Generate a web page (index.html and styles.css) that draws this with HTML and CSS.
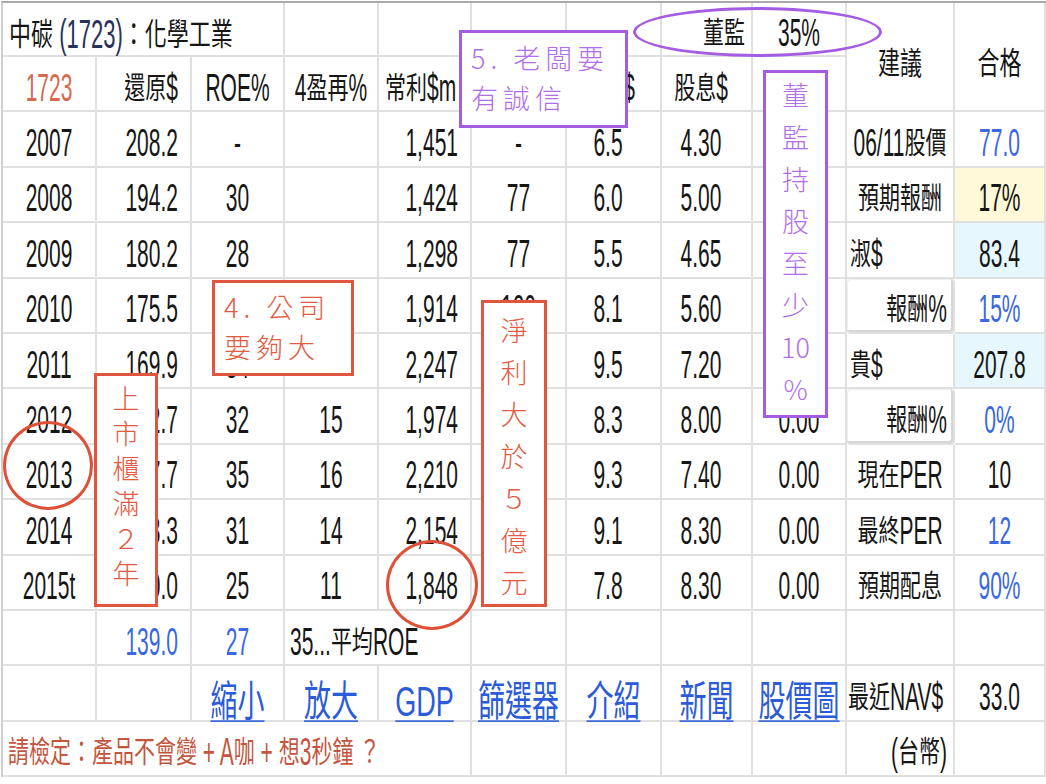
FILE: index.html
```html
<!DOCTYPE html>
<html lang="zh-Hant">
<head>
<meta charset="utf-8">
<title>中碳 (1723)：化學工業</title>
<link rel="stylesheet" href="styles.css">
</head>
<body>
<div class="page">
  <div class="sheet">
    <!-- row 1 -->
    <div class="c l s3 title"><span class="t"><span class="k">中碳</span> <span class="navy">(1723)</span><span class="k">：化學工業</span></span></div>
    <div class="c"></div><div class="c"></div><div class="c"></div><div class="c"></div>
    <div class="c r r6"><span class="t"><span class="k">董監</span></span></div>
    <div class="c"><span class="t">35%</span></div>
    <div class="c rs2 big"><span class="t"><span class="k">建議</span></span></div>
    <div class="c rs2 big"><span class="t"><span class="k">合格</span></span></div>
    <!-- row 2 -->
    <div class="c rd"><span class="t">1723</span></div>
    <div class="c r"><span class="t"><span class="k">還原</span>$</span></div>
    <div class="c"><span class="t">ROE%</span></div>
    <div class="c"><span class="t">4<span class="k">盈再</span>%</span></div>
    <div class="c l"><span class="t"><span class="k">常利</span>$m</span></div>
    <div class="c"></div>
    <div class="c pc"><span class="t"><span class="k">盈餘</span>$</span></div>
    <div class="c pc"><span class="t"><span class="k">股息</span>$</span></div>
    <div class="c"></div>
    <!-- 2007 -->
    <div class="c"><span class="t">2007</span></div>
    <div class="c r"><span class="t">208.2</span></div>
    <div class="c"><span class="t">-</span></div>
    <div class="c"></div>
    <div class="c r"><span class="t">1,451</span></div>
    <div class="c"><span class="t">-</span></div>
    <div class="c pc"><span class="t">6.5</span></div>
    <div class="c pc"><span class="t">4.30</span></div>
    <div class="c"></div>
    <div class="c"><span class="t">06/11<span class="k">股價</span></span></div>
    <div class="c b"><span class="t">77.0</span></div>
    <!-- 2008 -->
    <div class="c"><span class="t">2008</span></div>
    <div class="c r"><span class="t">194.2</span></div>
    <div class="c"><span class="t">30</span></div>
    <div class="c"></div>
    <div class="c r"><span class="t">1,424</span></div>
    <div class="c"><span class="t">77</span></div>
    <div class="c pc"><span class="t">6.0</span></div>
    <div class="c pc"><span class="t">5.00</span></div>
    <div class="c"></div>
    <div class="c"><span class="t"><span class="k">預期報酬</span></span></div>
    <div class="c yel"><span class="t">17%</span></div>
    <!-- 2009 -->
    <div class="c"><span class="t">2009</span></div>
    <div class="c r"><span class="t">180.2</span></div>
    <div class="c"><span class="t">28</span></div>
    <div class="c"></div>
    <div class="c r"><span class="t">1,298</span></div>
    <div class="c"><span class="t">77</span></div>
    <div class="c pc"><span class="t">5.5</span></div>
    <div class="c pc"><span class="t">4.65</span></div>
    <div class="c"></div>
    <div class="c l l3"><span class="t"><span class="k">淑</span>$</span></div>
    <div class="c cya"><span class="t">83.4</span></div>
    <!-- 2010 -->
    <div class="c"><span class="t">2010</span></div>
    <div class="c r"><span class="t">175.5</span></div>
    <div class="c"></div>
    <div class="c"></div>
    <div class="c r"><span class="t">1,914</span></div>
    <div class="c"><span class="t">100</span></div>
    <div class="c pc"><span class="t">8.1</span></div>
    <div class="c pc"><span class="t">5.60</span></div>
    <div class="c"></div>
    <div class="c r r6 boxed"><span class="t"><span class="k">報酬</span>%</span></div>
    <div class="c b"><span class="t">15%</span></div>
    <!-- 2011 -->
    <div class="c"><span class="t">2011</span></div>
    <div class="c r"><span class="t">169.9</span></div>
    <div class="c"><span class="t">34</span></div>
    <div class="c"></div>
    <div class="c r"><span class="t">2,247</span></div>
    <div class="c"></div>
    <div class="c pc"><span class="t">9.5</span></div>
    <div class="c pc"><span class="t">7.20</span></div>
    <div class="c"></div>
    <div class="c l l3"><span class="t"><span class="k">貴</span>$</span></div>
    <div class="c cya"><span class="t">207.8</span></div>
    <!-- 2012 -->
    <div class="c"><span class="t">2012</span></div>
    <div class="c r"><span class="t">152.7</span></div>
    <div class="c"><span class="t">32</span></div>
    <div class="c"><span class="t">15</span></div>
    <div class="c r"><span class="t">1,974</span></div>
    <div class="c"></div>
    <div class="c pc"><span class="t">8.3</span></div>
    <div class="c pc"><span class="t">8.00</span></div>
    <div class="c"><span class="t">0.00</span></div>
    <div class="c r r6 boxed"><span class="t"><span class="k">報酬</span>%</span></div>
    <div class="c b"><span class="t">0%</span></div>
    <!-- 2013 -->
    <div class="c"><span class="t">2013</span></div>
    <div class="c r"><span class="t">147.7</span></div>
    <div class="c"><span class="t">35</span></div>
    <div class="c"><span class="t">16</span></div>
    <div class="c r"><span class="t">2,210</span></div>
    <div class="c"></div>
    <div class="c pc"><span class="t">9.3</span></div>
    <div class="c pc"><span class="t">7.40</span></div>
    <div class="c"><span class="t">0.00</span></div>
    <div class="c"><span class="t"><span class="k">現在</span>PER</span></div>
    <div class="c"><span class="t">10</span></div>
    <!-- 2014 -->
    <div class="c"><span class="t">2014</span></div>
    <div class="c r"><span class="t">143.3</span></div>
    <div class="c"><span class="t">31</span></div>
    <div class="c"><span class="t">14</span></div>
    <div class="c r"><span class="t">2,154</span></div>
    <div class="c"></div>
    <div class="c pc"><span class="t">9.1</span></div>
    <div class="c pc"><span class="t">8.30</span></div>
    <div class="c"><span class="t">0.00</span></div>
    <div class="c"><span class="t"><span class="k">最終</span>PER</span></div>
    <div class="c b"><span class="t">12</span></div>
    <!-- 2015t -->
    <div class="c"><span class="t">2015t</span></div>
    <div class="c r"><span class="t">140.0</span></div>
    <div class="c"><span class="t">25</span></div>
    <div class="c"><span class="t">11</span></div>
    <div class="c r"><span class="t">1,848</span></div>
    <div class="c"></div>
    <div class="c pc"><span class="t">7.8</span></div>
    <div class="c pc"><span class="t">8.30</span></div>
    <div class="c"><span class="t">0.00</span></div>
    <div class="c"><span class="t"><span class="k">預期配息</span></span></div>
    <div class="c b"><span class="t">90%</span></div>
    <!-- average row -->
    <div class="c"></div>
    <div class="c r b"><span class="t">139.0</span></div>
    <div class="c b"><span class="t">27</span></div>
    <div class="c l s2 l5"><span class="t">35...<span class="k">平均</span>ROE</span></div>
    <div class="c"></div><div class="c"></div><div class="c"></div><div class="c"></div><div class="c"></div><div class="c"></div>
    <!-- links row -->
    <div class="c"></div>
    <div class="c"></div>
    <div class="c lnk"><a class="t" href="#">縮小</a></div>
    <div class="c lnk"><a class="t" href="#">放大</a></div>
    <div class="c lnk"><a class="t" href="#">GDP</a></div>
    <div class="c lnk"><a class="t" href="#">篩選器</a></div>
    <div class="c lnk"><a class="t" href="#">介紹</a></div>
    <div class="c lnk"><a class="t" href="#">新聞</a></div>
    <div class="c lnk"><a class="t" href="#">股價圖</a></div>
    <div class="c l l1"><span class="t"><span class="k">最近</span>NAV$</span></div>
    <div class="c"><span class="t">33.0</span></div>
    <!-- footer row -->
    <div class="c l s5 l5 warn"><span class="t"><span class="k">請檢定：產品不會變</span> + A<span class="k">咖</span> + <span class="k">想</span>3<span class="k">秒鐘</span> <span class="k">？</span></span></div>
    <div class="c"></div><div class="c"></div><div class="c"></div><div class="c"></div>
    <div class="c r r6"><span class="t">(<span class="k">台幣</span>)</span></div>
    <div class="c"></div>
  </div>

  <!-- annotations -->
  <div class="oval"></div>
  <div class="note pu note-boss">5. 老闆要<br>有誠信</div>
  <div class="note re note-big">4. 公司<br>要夠大</div>
  <div class="note re vert note-list"><span>上</span><span>市</span><span>櫃</span><span>滿</span><span>２</span><span>年</span></div>
  <div class="note re vert note-profit"><span>淨</span><span>利</span><span>大</span><span>於</span><span>５</span><span>億</span><span>元</span></div>
  <div class="note pu vert note-hold"><span>董</span><span>監</span><span>持</span><span>股</span><span>至</span><span>少</span><span>10</span><span>%</span></div>
  <div class="ring ring-year"></div>
  <div class="ring ring-profit"></div>
</div>
</body>
</html>
```

FILE: styles.css
```css
* { box-sizing: border-box; margin: 0; padding: 0; }
html, body { background: #fff; }
body {
  width: 1046px;
  height: 784px;
  overflow: hidden;
  font-family: "Liberation Sans", "Noto Sans CJK TC", sans-serif;
  color: #161616;
}
.page {
  position: relative;
  width: 1046px;
  height: 784px;
  padding: 1px 0 0 1px;
}
.sheet {
  display: grid;
  grid-template-columns: 94px 95px 93px 94px 93px 95px 95px 91px 94px 108px 91px;
  grid-template-rows: 54px repeat(13, 55.4px);
  width: 1045px;
  border-top: 2px solid #a9a9a9;
  border-left: 2px solid #d0d0d0;
}
.c {
  display: flex;
  align-items: center;
  justify-content: center;
  min-width: 0;
  padding-top: 8px;
  border-right: 2px solid #e0e0e0;
  border-bottom: 2px solid #e0e0e0;
  font-size: 21px;
  line-height: 24px;
  white-space: nowrap;
}
.t {
  display: inline-block;
  flex: none;
  transform: scaleY(1.85);
}
.k {
  display: inline-block;
  transform: scaleY(0.76);
}
.l { justify-content: flex-start; padding-left: 6px; }
.l1 { padding-left: 1px; }
.l3 { padding-left: 3px; }
.l5 { padding-left: 5px; }
.r { justify-content: flex-end; padding-right: 12px; }
.r6 { padding-right: 6px; }
.pc { padding-right: 11px; }
.s2 { grid-column: span 2; }
.s3 { grid-column: span 3; }
.s5 { grid-column: span 5; }
.rs2 { grid-row: span 2; padding-top: 14px; }
.big { font-size: 22px; }
.title { padding-top: 12px; font-size: 22px; }
.navy { color: #27325c; }
.rd { color: #d9684e; }
.b { color: #3a67e2; }
.yel { background: #fff9d8; }
.cya { background: #e6f8fd; }
.boxed {
  border-radius: 4px;
  box-shadow: inset -2px -2px 0 #d6d6d6, inset 1px 1px 0 #f0f0f0;
}
.warn { color: #c4553e; }
.lnk {
  align-items: flex-end;
  padding-top: 0;
}
.lnk .t {
  font-size: 27px;
  line-height: 30px;
  margin-bottom: -5px;
  transform-origin: 50% 100%;
  transform: scaleY(1.55);
  color: #2c5bd8;
  text-decoration: underline;
  text-decoration-thickness: 1px;
  text-underline-offset: 3px;
}

/* annotations */
.note {
  position: absolute;
  background: #fff;
  font-family: "Noto Sans CJK TC", sans-serif;
  font-weight: 300;
  font-size: 27px;
  line-height: 40px;
  white-space: nowrap;
}
.pu { border: 3px solid #a45ce2; color: #b06ee8; }
.re { border: 3px solid #e0553d; color: #e25a40; }
.note-boss {
  left: 459px; top: 30px; width: 169px; height: 98px;
  padding: 5px 0 0 9px;
  letter-spacing: 5px;
}
.note-big {
  left: 212px; top: 280px; width: 142px; height: 96px;
  padding: 4px 0 0 9px;
  letter-spacing: 5px;
}
.vert {
  display: flex;
  flex-direction: column;
  align-items: center;
}
.note-list { left: 94px; top: 373px; width: 64px; height: 234px; padding-top: 4px; line-height: 35px; }
.note-profit { left: 481px; top: 300px; width: 66px; height: 307px; padding-top: 6px; line-height: 42px; }
.note-hold { left: 763px; top: 70px; width: 65px; height: 348px; padding-top: 1px; line-height: 42px; }
.ring {
  position: absolute;
  border: 3px solid #df5038;
  border-radius: 50%;
}
.ring-year { left: 3px; top: 421px; width: 90px; height: 89px; }
.ring-profit { left: 386px; top: 540px; width: 92px; height: 90px; }
.oval {
  position: absolute;
  left: 633px; top: 7px; width: 249px; height: 50px;
  border: 3px solid #a45ce2;
  border-radius: 50%;
}
```
